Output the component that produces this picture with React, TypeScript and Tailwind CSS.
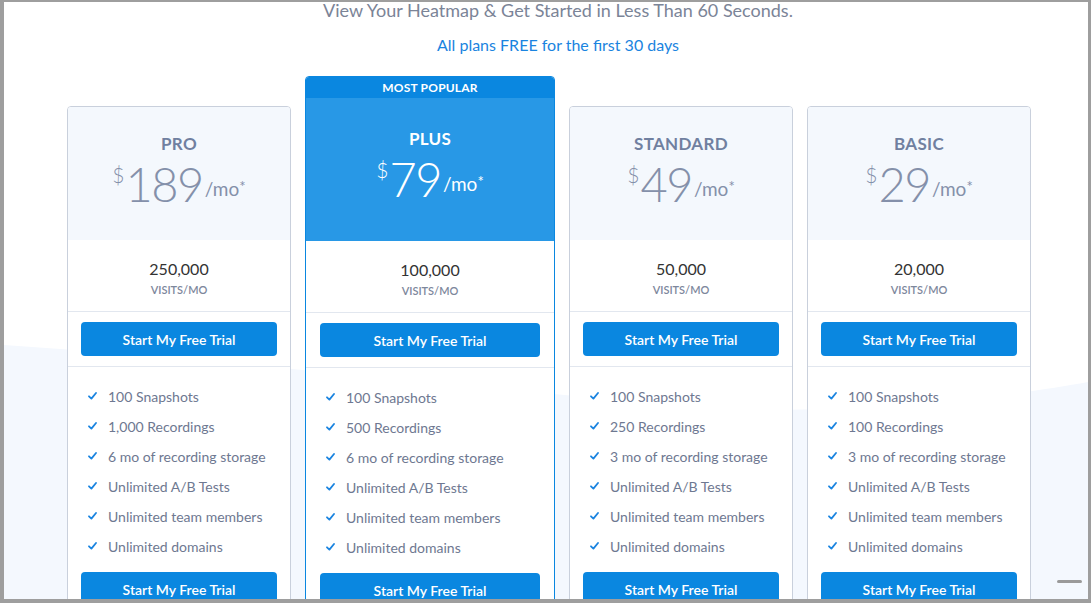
import React from "react";

type Plan = {
  name: string;
  price: string;
  visits: string;
  features: string[];
  popular?: boolean;
};

const plans: Plan[] = [
  {
    name: "PRO",
    price: "189",
    visits: "250,000",
    features: [
      "100 Snapshots",
      "1,000 Recordings",
      "6 mo of recording storage",
      "Unlimited A/B Tests",
      "Unlimited team members",
      "Unlimited domains",
    ],
  },
  {
    name: "PLUS",
    price: "79",
    visits: "100,000",
    popular: true,
    features: [
      "100 Snapshots",
      "500 Recordings",
      "6 mo of recording storage",
      "Unlimited A/B Tests",
      "Unlimited team members",
      "Unlimited domains",
    ],
  },
  {
    name: "STANDARD",
    price: "49",
    visits: "50,000",
    features: [
      "100 Snapshots",
      "250 Recordings",
      "3 mo of recording storage",
      "Unlimited A/B Tests",
      "Unlimited team members",
      "Unlimited domains",
    ],
  },
  {
    name: "BASIC",
    price: "29",
    visits: "20,000",
    features: [
      "100 Snapshots",
      "100 Recordings",
      "3 mo of recording storage",
      "Unlimited A/B Tests",
      "Unlimited team members",
      "Unlimited domains",
    ],
  },
];

function Check() {
  return (
    <svg width="9" height="8" viewBox="0 0 9 8" className="shrink-0">
      <path d="M1 4.3 L3.4 6.6 L8 1" fill="none" stroke="#1a84e0" strokeWidth="1.8" strokeLinecap="round" strokeLinejoin="round" />
    </svg>
  );
}

function Card({ plan }: { plan: Plan }) {
  const pop = !!plan.popular;
  return (
    <div
      className={
        pop
          ? "w-[250px] flex flex-col rounded-t-[4px] border border-[#0a87e0] bg-white overflow-hidden"
          : "w-[224px] mt-[30px] flex flex-col rounded-t-[4px] border border-[#c9d0dc] bg-white overflow-hidden"
      }
    >
      {pop && (
        <div className="h-[21px] bg-[#0a87e0] text-white text-[12px] font-bold flex items-center justify-center tracking-[0.2px]">
          MOST POPULAR
        </div>
      )}
      <div
        className={
          pop
            ? "h-[143px] bg-[#2898e6] flex flex-col items-center pt-[31px] text-white"
            : "h-[133px] bg-[#f4f8fd] flex flex-col items-center pt-[27px] text-[#7080a0]"
        }
      >
        <div className="text-[17px] leading-[20px] font-bold tracking-[0.3px]">{plan.name}</div>
        <div className="flex items-start mt-[4px]">
          <span className={pop ? "text-[21px] leading-none mt-[6px] font-light text-white mr-[1px]" : "text-[21px] leading-none mt-[6px] font-light text-[#8490aa] mr-[1px]"}>$</span>
          <span className={pop ? "text-[47px] leading-[52px] font-light tracking-[-1.5px] text-white" : "text-[47px] leading-[52px] font-light tracking-[-1.5px] text-[#8490aa]"}>
            {plan.price}
          </span>
          <span className={pop ? "text-[19px] leading-none mt-[21px] ml-[2px] text-white" : "text-[19px] leading-none mt-[21px] ml-[2px] text-[#8490aa]"}>
            /mo<span className="text-[15px] align-top">*</span>
          </span>
        </div>
      </div>
      <div className="h-[72px] flex flex-col items-center pt-[19px] border-b border-[#e2e7ef]">
        <div className="text-[16px] leading-[20px] text-[#333]">{plan.visits}</div>
        <div className="text-[11px] leading-[14px] font-semibold text-[#7d879c] mt-[4px]">VISITS/MO</div>
      </div>
      <div className={pop ? "px-[14px] py-[10px] border-b border-[#e2e7ef]" : "px-[13px] py-[10px] border-b border-[#e2e7ef]"}>
        <button className="w-full h-[34px] rounded-[4px] bg-[#0a87e0] text-white text-[14px] font-semibold">
          Start My Free Trial
        </button>
      </div>
      <ul className="pt-[14px] pl-[20px]">
        {plan.features.map((f) => (
          <li key={f} className="h-[30px] flex items-center gap-[11px] text-[14px] text-[#6e7891]">
            <Check />
            <span>{f}</span>
          </li>
        ))}
      </ul>
      <div className={pop ? "px-[14px] pt-[11px]" : "px-[13px] pt-[11px]"}>
        <button className="w-full h-[34px] rounded-[4px] bg-[#0a87e0] text-white text-[14px] font-semibold">
          Start My Free Trial
        </button>
      </div>
    </div>
  );
}

export default function App() {
  return (
    <div
      className="w-[1091px] h-[603px] overflow-hidden relative bg-white border-t-2 border-l-4 border-r-[3px] border-b-4 border-[#9e9e9e]"
      style={{ fontFamily: "Lato, 'Open Sans', sans-serif" }}
    >
      <svg className="absolute left-0 top-0" width="1084" height="597" viewBox="0 0 1084 597">
        <path d="M0 343 C 250 360, 500 390, 700 405 C 850 415, 1000 395, 1084 380 L1084 597 L0 597 Z" fill="#f4f8fe" />
      </svg>
      <div className="relative flex flex-col">
        <div className="pl-[24px] text-center text-[18px] leading-[20px] text-[#7b8497] -mt-[2px]">
          View Your Heatmap &amp; Get Started in Less Than 60 Seconds.
        </div>
        <div className="pl-[24px] text-center text-[16px] leading-[18px] text-[#1a84e0] mt-[16px]">
          All plans FREE for the first 30 days
        </div>
        <div className="flex items-start gap-[14px] pl-[63px] mt-[22px]">
          {plans.map((p) => (
            <Card key={p.name} plan={p} />
          ))}
        </div>
      </div>
      <div className="absolute right-[6px] bottom-[16px] w-[25px] h-[3px] rounded-full bg-[#9a9a9a]" />
    </div>
  );
}
